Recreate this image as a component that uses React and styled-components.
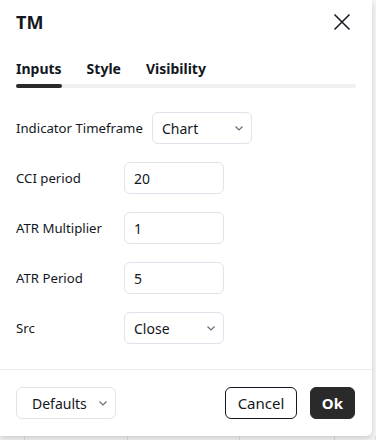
import React from "react";
import styled, { createGlobalStyle } from "styled-components";

const GlobalStyle = createGlobalStyle`
  html, body {
    margin: 0;
    padding: 0;
    background: #ffffff;
    font-family: "Noto Sans", "Liberation Sans", sans-serif;
    color: #131722;
  }
`;

const Page = styled.div`
  width: 376px;
  height: 440px;
  overflow: hidden;
  display: flex;
  flex-direction: column;
  background: #f6f6f6;
`;

const Dialog = styled.div`
  width: 372px;
  height: 436px;
  flex-shrink: 0;
  background: #ffffff;
  border-radius: 0 0 6px 0;
  box-shadow: 0 2px 6px rgba(0, 0, 0, 0.18);
  display: flex;
  flex-direction: column;
  position: relative;
  z-index: 1;
`;

const Header = styled.div`
  display: flex;
  align-items: center;
  justify-content: space-between;
  height: 44px;
  padding: 0 16px 0 16px;
`;

const Title = styled.div`
  font-size: 18px;
  font-weight: 700;
  letter-spacing: 0.2px;
`;

const CloseButton = styled.button`
  border: none;
  background: none;
  padding: 0;
  width: 20px;
  height: 20px;
  display: flex;
  align-items: center;
  justify-content: center;
  margin-right: 4px;
  color: #131722;
`;

const Tabs = styled.div`
  display: flex;
  gap: 25px;
  margin: 10px 16px 0 16px;
  width: 340px;
  position: relative;
  height: 34px;
  &::after {
    content: "";
    position: absolute;
    left: 0;
    right: 0;
    bottom: 0;
    height: 4px;
    border-radius: 2px;
    background: #f0f0f0;
  }
`;

const Tab = styled.div`
  font-size: 14px;
  font-weight: 700;
  position: relative;
  padding-top: 5px;
  &::after {
    content: "";
    display: ${(p) => (p.$active ? "block" : "none")};
    position: absolute;
    left: 0;
    right: 0;
    bottom: 0;
    height: 4px;
    border-radius: 2px;
    background: #2a2a2a;
    z-index: 1;
  }
`;

const Body = styled.div`
  flex: 1;
  display: flex;
  flex-direction: column;
  gap: 18px;
  padding: 24px 16px 0 16px;
`;

const Row = styled.div`
  display: grid;
  grid-template-columns: ${(p) => p.$labelWidth || "108px"} 100px;
  align-items: center;
  height: 32px;
`;

const Label = styled.div`
  font-size: 13.2px;
  white-space: nowrap;
`;

const Field = styled.div`
  box-sizing: border-box;
  width: 100px;
  height: 32px;
  border: 1px solid #e0e3eb;
  border-radius: 6px;
  display: flex;
  align-items: center;
  justify-content: space-between;
  padding: 0 6px 0 9px;
  font-size: 14px;
`;

const Footer = styled.div`
  border-top: 1px solid #ececec;
  height: 66px;
  display: flex;
  align-items: center;
  padding: 0 17px 0 16px;
  gap: 13px;
`;

const DefaultsButton = styled.div`
  box-sizing: border-box;
  width: 100px;
  height: 32px;
  border: 1px solid #e0e3eb;
  border-radius: 6px;
  display: flex;
  align-items: center;
  justify-content: space-between;
  padding: 0 6px 0 15px;
  font-size: 14px;
  margin-right: auto;
`;

const Button = styled.button`
  box-sizing: border-box;
  height: 32px;
  padding: 0 ${(p) => (p.$primary ? "11px" : "11.5px")};
  border-radius: 6px;
  font-family: inherit;
  font-size: 15px;
  font-weight: ${(p) => (p.$primary ? 700 : 400)};
  border: 1px solid ${(p) => (p.$primary ? "#2a2a2a" : "#131722")};
  background: ${(p) => (p.$primary ? "#2a2a2a" : "#ffffff")};
  color: ${(p) => (p.$primary ? "#ffffff" : "#131722")};
`;

const Under = styled.div`
  flex: 1;
  display: grid;
  grid-template-columns: 25px 103px 112px 95px 1fr;
  background: #f3f3f3;
  & > div {
    border-right: 1px solid #dcdcdc;
  }
`;

const Chevron = () => (
  <svg width="12" height="12" viewBox="0 0 12 12" fill="none">
    <path d="M2.5 4.5L6 8l3.5-3.5" stroke="#6a6d78" strokeWidth="1.2" />
  </svg>
);

const CloseIcon = () => (
  <svg width="18" height="18" viewBox="0 0 18 18" fill="none">
    <path d="M1.5 1.5l15 15M16.5 1.5l-15 15" stroke="#131722" strokeWidth="1.5" />
  </svg>
);

const rows = [
  { label: "Indicator Timeframe", value: "Chart", select: true, labelWidth: "136px" },
  { label: "CCI period", value: "20" },
  { label: "ATR Multiplier", value: "1" },
  { label: "ATR Period", value: "5" },
  { label: "Src", value: "Close", select: true },
];

export default function App() {
  return (
    <>
      <GlobalStyle />
      <Page>
        <Dialog>
          <Header>
            <Title>TM</Title>
            <CloseButton>
              <CloseIcon />
            </CloseButton>
          </Header>
          <Tabs>
            <Tab $active>Inputs</Tab>
            <Tab>Style</Tab>
            <Tab>Visibility</Tab>
          </Tabs>
          <Body>
            {rows.map((r) => (
              <Row key={r.label} $labelWidth={r.labelWidth}>
                <Label>{r.label}</Label>
                <Field>
                  <span>{r.value}</span>
                  {r.select && <Chevron />}
                </Field>
              </Row>
            ))}
          </Body>
          <Footer>
            <DefaultsButton>
              <span>Defaults</span>
              <Chevron />
            </DefaultsButton>
            <Button>Cancel</Button>
            <Button $primary>Ok</Button>
          </Footer>
        </Dialog>
        <Under>
          <div />
          <div />
          <div />
          <div />
          <div />
        </Under>
      </Page>
    </>
  );
}
